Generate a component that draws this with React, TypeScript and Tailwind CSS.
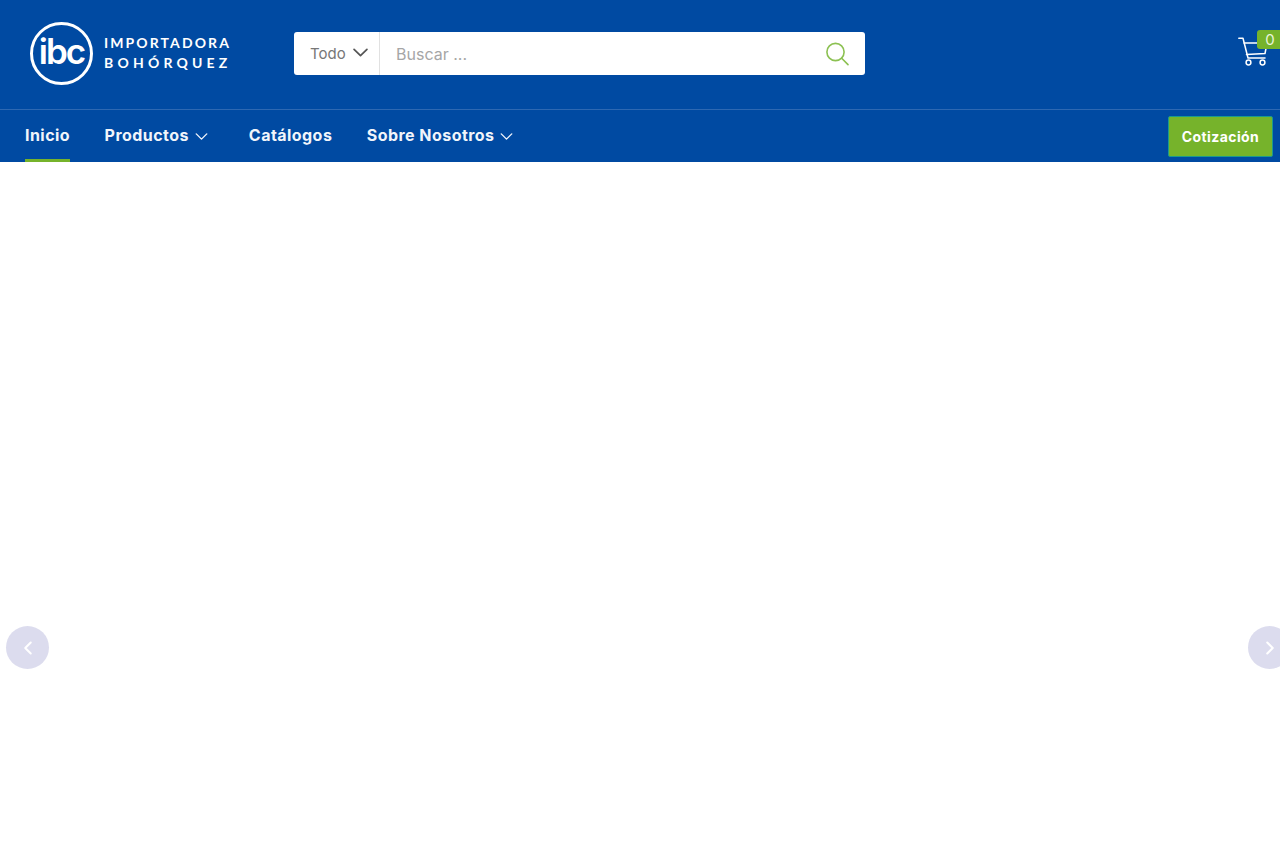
import React from 'react';
import { ChevronLeft, ChevronRight } from 'lucide-react';

const Caret: React.FC<{ className: string; strokeWidth: number }> = ({ className, strokeWidth }) => (
  <svg className={className} viewBox="0 0 14 8" fill="none" stroke="currentColor" strokeWidth={strokeWidth} strokeLinecap="round" strokeLinejoin="round">
    <path d="M1 1 L7 7 L13 1" />
  </svg>
);

const Logo: React.FC = () => (
  <div className="flex items-center w-[201px] h-[63px] mt-[-2px]">
    <div className="relative w-[63px] h-[63px] shrink-0 rounded-full border-[3px] border-white flex items-center justify-center">
      <span className="font-['Inter',sans-serif] font-semibold text-white text-[35px] leading-none tracking-[-2px] pb-[5px]">ibc</span>
    </div>
    <div className="ml-[11px] mt-[-1px] font-['Lato',sans-serif] font-bold text-white text-[14px] leading-[20px]">
      <div className="tracking-[2.1px] whitespace-nowrap">IMPORTADORA</div>
      <div className="tracking-[4.2px] whitespace-nowrap">BOHÓRQUEZ</div>
    </div>
  </div>
);

const SearchBar: React.FC = () => (
  <div className="ml-[63px] mt-[-2px] w-[571px] h-[43px] bg-white rounded-[3px] flex items-center font-['Inter',sans-serif]">
    <div className="w-[86px] h-full shrink-0 border-r border-[#e1e1e1] flex items-center pl-[16px] pt-[1px] text-[15px] text-[#777777]">
      Todo
      <Caret className="ml-[7px] w-[15px] h-[9px] text-[#555555] mt-[-3px]" strokeWidth={1.6} />
    </div>
    <div className="flex-1 pl-[16px] text-[16px] text-[#a6a6a6]">Buscar ...</div>
    <svg className="mr-[16px] w-[24px] h-[24px]" viewBox="0 0 24 24" fill="none" stroke="#8cc152" strokeWidth="1.6" strokeLinecap="round">
      <circle cx="10.5" cy="10" r="8.6" />
      <path d="M16.7 16.2 L23 22.6" />
    </svg>
  </div>
);

const Cart: React.FC = () => (
  <div className="ml-auto relative w-[42px] h-[40px] mt-[-7px]">
    <svg className="absolute left-0 top-[6px] w-[30px] h-[29px]" viewBox="0 0 30 29" fill="none" stroke="#ffffff" strokeWidth="1.5" strokeLinecap="round" strokeLinejoin="round">
      <path d="M0.8 1.2 H5 L10 21 H27" />
      <path d="M6 6 H29 L27 16.5 L8.5 17.5" />
      <circle cx="10.5" cy="25.5" r="2.4" />
      <circle cx="24.5" cy="25.5" r="2.4" />
    </svg>
    <span className="absolute left-[19px] top-[-1px] w-[23px] h-[19px] pl-[3px] bg-[#76b32b] rounded-l-[3px] text-center text-[15px] leading-[19px] text-[#e9f5da] font-['Inter',sans-serif]">0</span>
  </div>
);

const NavItem: React.FC<{ label: string; caret?: boolean; active?: boolean }> = ({ label, caret, active }) => (
  <a className={`h-full flex items-center text-[16px] font-bold tracking-[0.45px] text-[#f1f5fb] whitespace-nowrap border-b-[3px] pt-[1px] ${active ? 'border-[#76b32b]' : 'border-transparent'}`}>
    {label}
    {caret && <Caret className="ml-[6px] mr-[6.5px] w-[13px] h-[7px] mt-[2px]" strokeWidth={1.6} />}
  </a>
);

const App: React.FC = () => {
  return (
    <div className="relative w-full h-[853px] overflow-hidden bg-white font-['Open_Sans',sans-serif]">
      <header className="bg-[#004aa2]">
        <div className="h-[109px] flex items-center pl-[30px] pr-0">
          <Logo />
          <SearchBar />
          <Cart />
        </div>
        <nav className="h-[53px] border-t border-[#2d68b2] flex items-center pl-[25px] pr-[7px] gap-[34.5px] font-['Inter',sans-serif]">
          <NavItem label="Inicio" active />
          <NavItem label="Productos" caret />
          <NavItem label="Catálogos" />
          <NavItem label="Sobre Nosotros" caret />
          <button className="ml-auto w-[105px] h-[41px] bg-[#76b32b] border border-[#1c9a8c] rounded-[2px] text-[14px] font-bold tracking-[0.4px] text-white">
            Cotización
          </button>
        </nav>
      </header>
      <main className="relative h-[691px]">
        <button className="absolute left-[6px] top-[464px] w-[43px] h-[43px] rounded-full bg-[#dcdcee] flex items-center justify-center text-white">
          <ChevronLeft className="w-[22px] h-[22px]" strokeWidth={2.25} />
        </button>
        <button className="absolute left-[1248px] top-[464px] w-[43px] h-[43px] rounded-full bg-[#dcdcee] flex items-center justify-center text-white">
          <ChevronRight className="w-[22px] h-[22px]" strokeWidth={2.25} />
        </button>
      </main>
    </div>
  );
};

export default App;
